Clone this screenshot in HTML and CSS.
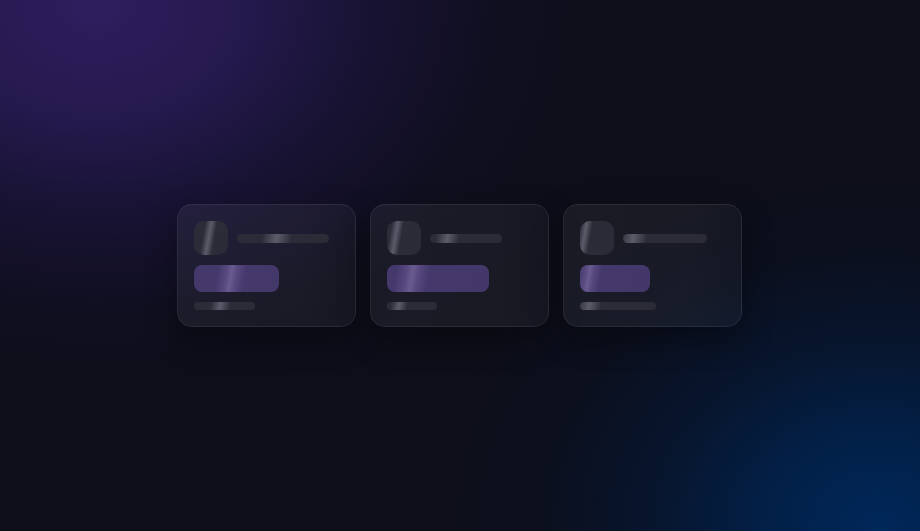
FILE: index.html
```html
<!DOCTYPE html>
<html lang="en">
<head>
<meta charset="utf-8">
<title>Loading cards</title>
<link rel="stylesheet" href="styles.css">
</head>
<body>
<main class="stage">
  <div class="card card--a">
    <div class="card__head">
      <div class="sk sk--avatar"></div>
      <div class="sk sk--line" style="width:92px"></div>
    </div>
    <div class="sk sk--block" style="width:85px"></div>
    <div class="sk sk--small" style="width:61px"></div>
  </div>
  <div class="card card--b">
    <div class="card__head">
      <div class="sk sk--avatar"></div>
      <div class="sk sk--line" style="width:72px"></div>
    </div>
    <div class="sk sk--block" style="width:102px"></div>
    <div class="sk sk--small" style="width:50px"></div>
  </div>
  <div class="card card--c">
    <div class="card__head">
      <div class="sk sk--avatar"></div>
      <div class="sk sk--line" style="width:84px"></div>
    </div>
    <div class="sk sk--block" style="width:70px"></div>
    <div class="sk sk--small" style="width:76px"></div>
  </div>
</main>
</body>
</html>
```
FILE: styles.css
```css
html, body {
  margin: 0;
  padding: 0;
}
body {
  width: 920px;
  height: 531px;
  overflow: hidden;
  font-family: "Inter", "Liberation Sans", sans-serif;
  background-color: #0d0e19;
  background-image:
    radial-gradient(ellipse 560px 420px at 95px 8px, rgba(46, 30, 94, 1) 0%, rgba(42, 28, 88, 0.85) 25%, rgba(32, 22, 70, 0.55) 50%, rgba(20, 16, 45, 0.22) 75%, rgba(13, 14, 25, 0) 100%),
    radial-gradient(ellipse 460px 370px at 880px 525px, rgba(0, 40, 90, 1) 0%, rgba(0, 36, 82, 0.8) 25%, rgba(2, 28, 64, 0.5) 50%, rgba(6, 20, 45, 0.2) 75%, rgba(13, 14, 25, 0) 100%);
}
.stage {
  height: 531px;
  display: flex;
  align-items: center;
  justify-content: center;
  gap: 14px;
  padding-right: 2px;
  box-sizing: border-box;
}
.card {
  box-sizing: border-box;
  width: 179px;
  padding: 16px;
  border-radius: 15px;
  border: 1px solid rgba(255, 255, 255, 0.08);
  background: linear-gradient(90deg, rgba(255,255,255,0.055) 0%, rgba(255,255,255,0.05) 70%, rgba(255,255,255,0.035) 100%);
  box-shadow: 0 12px 30px rgba(0, 0, 0, 0.35);
  display: flex;
  flex-direction: column;
  gap: 10px;
}
.card__head {
  display: flex;
  align-items: center;
  gap: 9px;
}
.sk {
  background-size: 200% 100%;
  background-repeat: no-repeat;
  background-image: linear-gradient(100deg, #2b2b38 0%, #2c2c39 42%, #4a4a58 47%, #5b5b69 50%, #4a4a58 53%, #2c2c39 58%, #2b2b38 100%);
}
.sk--avatar {
  width: 34px;
  height: 34px;
  border-radius: 10px;
  flex: none;
}
.sk--line {
  height: 9px;
  border-radius: 5px;
}
.sk--block {
  height: 27px;
  border-radius: 8px;
  background-image: linear-gradient(100deg, #433668 0%, #45386b 42%, #57497f 47%, #695a8f 50%, #57497f 53%, #45386b 58%, #433668 100%);
}
.sk--small {
  height: 8px;
  border-radius: 4px;
}
.card--a .sk { background-position: 57% 0; }
.card--b .sk { background-position: 76% 0; }
.card--c .sk { background-position: 88% 0; }
```
